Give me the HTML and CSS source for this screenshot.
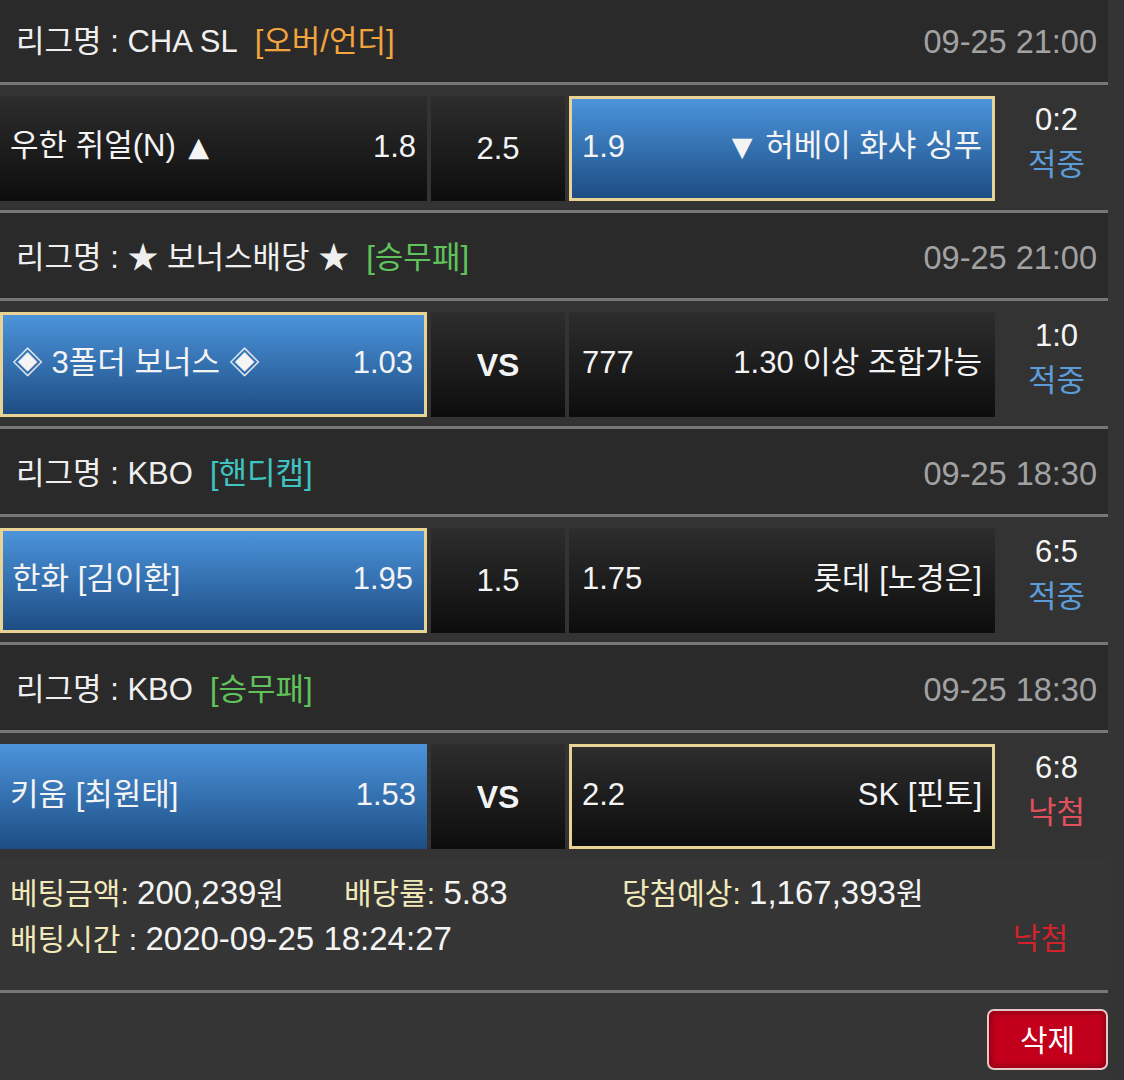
FILE: index.html
```html
<!DOCTYPE html>
<html lang="ko">
<head>
<meta charset="utf-8">
<title>베팅내역</title>
<link rel="stylesheet" href="styles.css">
</head>
<body>
<div class="slip">
  <div class="league">
    <div class="league-name">리그명 : CHA SL<span class="tag tag-ou">[오버/언더]</span></div>
    <div class="league-time">09-25 21:00</div>
  </div>
  <div class="match">
    <div class="pick home"><span>우한 쥐얼(N) <span class="arrow">▲</span></span><span>1.8</span></div>
    <div class="pick draw">2.5</div>
    <div class="pick away win picked"><span>1.9</span><span><span class="arrow">▼</span> 허베이 화샤 싱푸</span></div>
    <div class="result"><span class="score">0:2</span><span class="hit">적중</span></div>
  </div>

  <div class="league">
    <div class="league-name">리그명 : ★ 보너스배당 ★<span class="tag tag-wdl">[승무패]</span></div>
    <div class="league-time">09-25 21:00</div>
  </div>
  <div class="match">
    <div class="pick home win picked"><span>◈ 3폴더 보너스 ◈</span><span>1.03</span></div>
    <div class="pick draw vs">VS</div>
    <div class="pick away"><span>777</span><span>1.30 이상 조합가능</span></div>
    <div class="result"><span class="score">1:0</span><span class="hit">적중</span></div>
  </div>

  <div class="league">
    <div class="league-name">리그명 : KBO<span class="tag tag-hc">[핸디캡]</span></div>
    <div class="league-time">09-25 18:30</div>
  </div>
  <div class="match">
    <div class="pick home win picked"><span>한화 [김이환]</span><span>1.95</span></div>
    <div class="pick draw">1.5</div>
    <div class="pick away"><span>1.75</span><span>롯데 [노경은]</span></div>
    <div class="result"><span class="score">6:5</span><span class="hit">적중</span></div>
  </div>

  <div class="league">
    <div class="league-name">리그명 : KBO<span class="tag tag-wdl">[승무패]</span></div>
    <div class="league-time">09-25 18:30</div>
  </div>
  <div class="match last">
    <div class="pick home win"><span>키움 [최원태]</span><span>1.53</span></div>
    <div class="pick draw vs">VS</div>
    <div class="pick away picked"><span>2.2</span><span>SK [핀토]</span></div>
    <div class="result"><span class="score">6:8</span><span class="miss">낙첨</span></div>
  </div>

  <div class="summary">
    <div class="summary-row cols">
      <div><span class="label">베팅금액:</span> <span class="value">200,239</span>원</div>
      <div><span class="label">배당률:</span> <span class="value">5.83</span></div>
      <div><span class="label">당첨예상:</span> <span class="value">1,167,393</span>원</div>
    </div>
    <div class="summary-row split">
      <div><span class="label">배팅시간</span> : <span class="value">2020-09-25 18:24:27</span></div>
      <div class="status-lose">낙첨</div>
    </div>
  </div>

  <div class="actions">
    <button class="btn-delete" type="button">삭제</button>
  </div>
</div>
</body>
</html>
```

FILE: styles.css
```css
html, body {
  margin: 0;
  padding: 0;
}

body {
  background: #343434;
  font-family: "Liberation Sans", "Noto Sans CJK KR", sans-serif;
  color: #f2f2f2;
  overflow: hidden;
}

.slip {
  width: 1108px;
  margin-top: -3px;
}

.league {
  box-sizing: border-box;
  height: 88px;
  padding: 4px 11px 0 16px;
  display: flex;
  align-items: center;
  justify-content: space-between;
  background: #2a2a2a;
  border-bottom: 3px solid #777777;
  font-size: 31px;
  line-height: 40px;
  color: #efefef;
  white-space: nowrap;
}

.tag {
  margin-left: 17px;
}

.tag-ou { color: #f2a43e; }
.tag-wdl { color: #5fc25a; }
.tag-hc { color: #3fc4c2; }

.league-time {
  color: #a2a2a2;
  font-size: 32.5px;
}

.match {
  display: flex;
  align-items: flex-start;
  gap: 4px;
  padding: 11px 0 9px;
  background: #333333;
  border-bottom: 3px solid #777777;
}

.match.last {
  border-bottom: 0;
}

.pick {
  box-sizing: border-box;
  height: 105px;
  display: flex;
  align-items: center;
  justify-content: space-between;
  padding: 0 11px 4px 10px;
  background: linear-gradient(#2d2d2d, #0d0d0d);
  font-size: 31px;
  line-height: 40px;
  color: #f4f4f4;
  white-space: nowrap;
}

.arrow {
  font-family: "DejaVu Sans", sans-serif;
  font-size: 27px;
  margin: 0 4px;
}

.home { width: 427px; }

.draw {
  width: 134px;
  justify-content: center;
  padding: 0;
}

.vs {
  font-weight: bold;
  font-size: 32px;
}

.away {
  width: 426px;
  padding: 0 13px 4px 13px;
}

.win {
  background: linear-gradient(#4c94db, #1d4d84);
}

.picked {
  border: 3px solid #e8d394;
  padding-left: 9px;
}

.away.picked {
  padding: 0 10px 4px 10px;
}

.result {
  flex: 1;
  box-sizing: border-box;
  height: 105px;
  display: flex;
  flex-direction: column;
  align-items: center;
  justify-content: center;
  padding: 0 0 14px 6px;
  font-size: 31px;
  line-height: 45px;
}

.score { color: #f4f4f4; }
.hit { color: #5b9cd9; }
.miss { color: #e0505c; }

.summary {
  padding: 12px 40px 28px 10px;
  background: #353535;
  border-bottom: 3px solid #777777;
  font-size: 30px;
  color: #f4f4f4;
}

.summary-row {
  height: 46px;
  line-height: 46px;
}

.summary-row.cols {
  display: grid;
  grid-template-columns: 334px 278px auto;
}

.summary-row.split {
  display: flex;
  justify-content: space-between;
}

.value {
  font-size: 33px;
}

.label {
  color: #f1e9b9;
}

.status-lose {
  color: #d3222c;
}

.actions {
  display: flex;
  justify-content: flex-end;
  padding: 16px 0 20px;
  background: #353535;
}

.btn-delete {
  width: 121px;
  height: 61px;
  box-sizing: border-box;
  border: 2px solid #e8c5c9;
  border-radius: 7px;
  background: #c2001c;
  box-shadow: inset 0 0 7px rgba(0, 0, 0, 0.45);
  color: #ffffff;
  font-family: "Liberation Sans", "Noto Sans CJK KR", sans-serif;
  font-size: 30px;
  padding: 0 0 4px;
}
```
